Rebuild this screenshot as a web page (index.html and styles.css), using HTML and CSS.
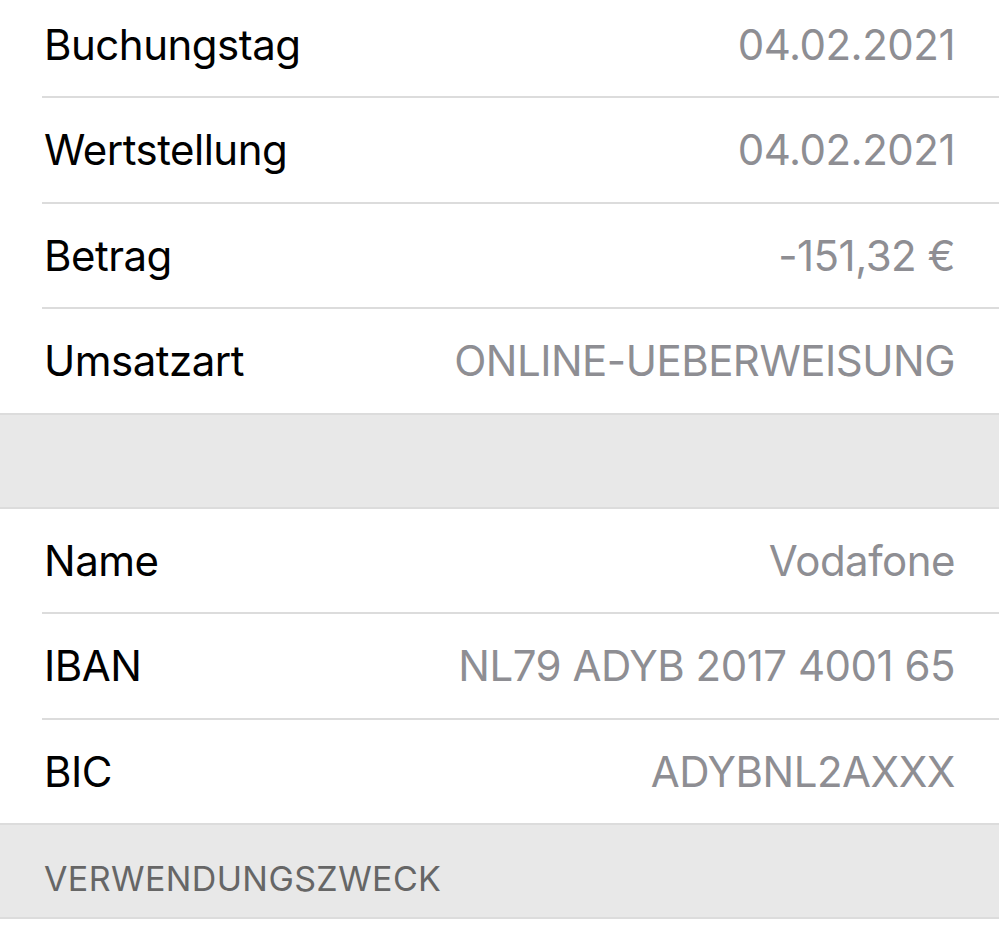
FILE: index.html
```html
<!DOCTYPE html>
<html lang="de">
<head>
<meta charset="utf-8">
<link rel="stylesheet" href="styles.css">
</head>
<body>
<div class="page">
  <section class="group group-first">
    <div class="row"><span class="label">Buchungstag</span><span class="value">04.02.2021</span></div>
    <div class="row"><span class="label">Wertstellung</span><span class="value">04.02.2021</span></div>
    <div class="row"><span class="label">Betrag</span><span class="value">-151,32 €</span></div>
    <div class="row"><span class="label">Umsatzart</span><span class="value">ONLINE-UEBERWEISUNG</span></div>
  </section>
  <div class="spacer"></div>
  <section class="group">
    <div class="row"><span class="label">Name</span><span class="value">Vodafone</span></div>
    <div class="row"><span class="label">IBAN</span><span class="value">NL79 ADYB 2017 4001 65</span></div>
    <div class="row"><span class="label">BIC</span><span class="value">ADYBNL2AXXX</span></div>
  </section>
  <div class="header">VERWENDUNGSZWECK</div>
  <section class="group group-last"></section>
</div>
</body>
</html>
```

FILE: styles.css
```css
html, body {
  margin: 0;
  padding: 0;
  background: #ffffff;
}
body {
  font-family: Inter, "Noto Sans", sans-serif;
  -webkit-font-smoothing: antialiased;
  overflow: hidden;
}
.page {
  display: flex;
  flex-direction: column;
  margin-top: -7.5px;
}
.group {
  background: #ffffff;
  border-top: 2px solid #dcdcdc;
  border-bottom: 2px solid #dcdcdc;
  padding-left: 42px;
}
.group-first {
  border-top: none;
}
.group-last {
  border-bottom: none;
  height: 40px;
}
.row {
  height: 103.5px;
  display: flex;
  align-items: center;
  justify-content: space-between;
  padding-left: 2px;
  padding-right: 44px;
  border-bottom: 2px solid #dcdcdc;
}
.row:last-child {
  border-bottom: none;
}
.label {
  font-size: 42px;
  color: #000000;
  letter-spacing: -0.5px;
}
.value {
  font-size: 42px;
  color: #8e8e93;
  letter-spacing: -0.5px;
}
.spacer {
  height: 92px;
  background: #e8e8e8;
}
.header {
  height: 92px;
  background: #e8e8e8;
  box-sizing: border-box;
  padding-left: 44px;
  padding-top: 33px;
  font-size: 34px;
  color: #666666;
  letter-spacing: 0.4px;
}
```
